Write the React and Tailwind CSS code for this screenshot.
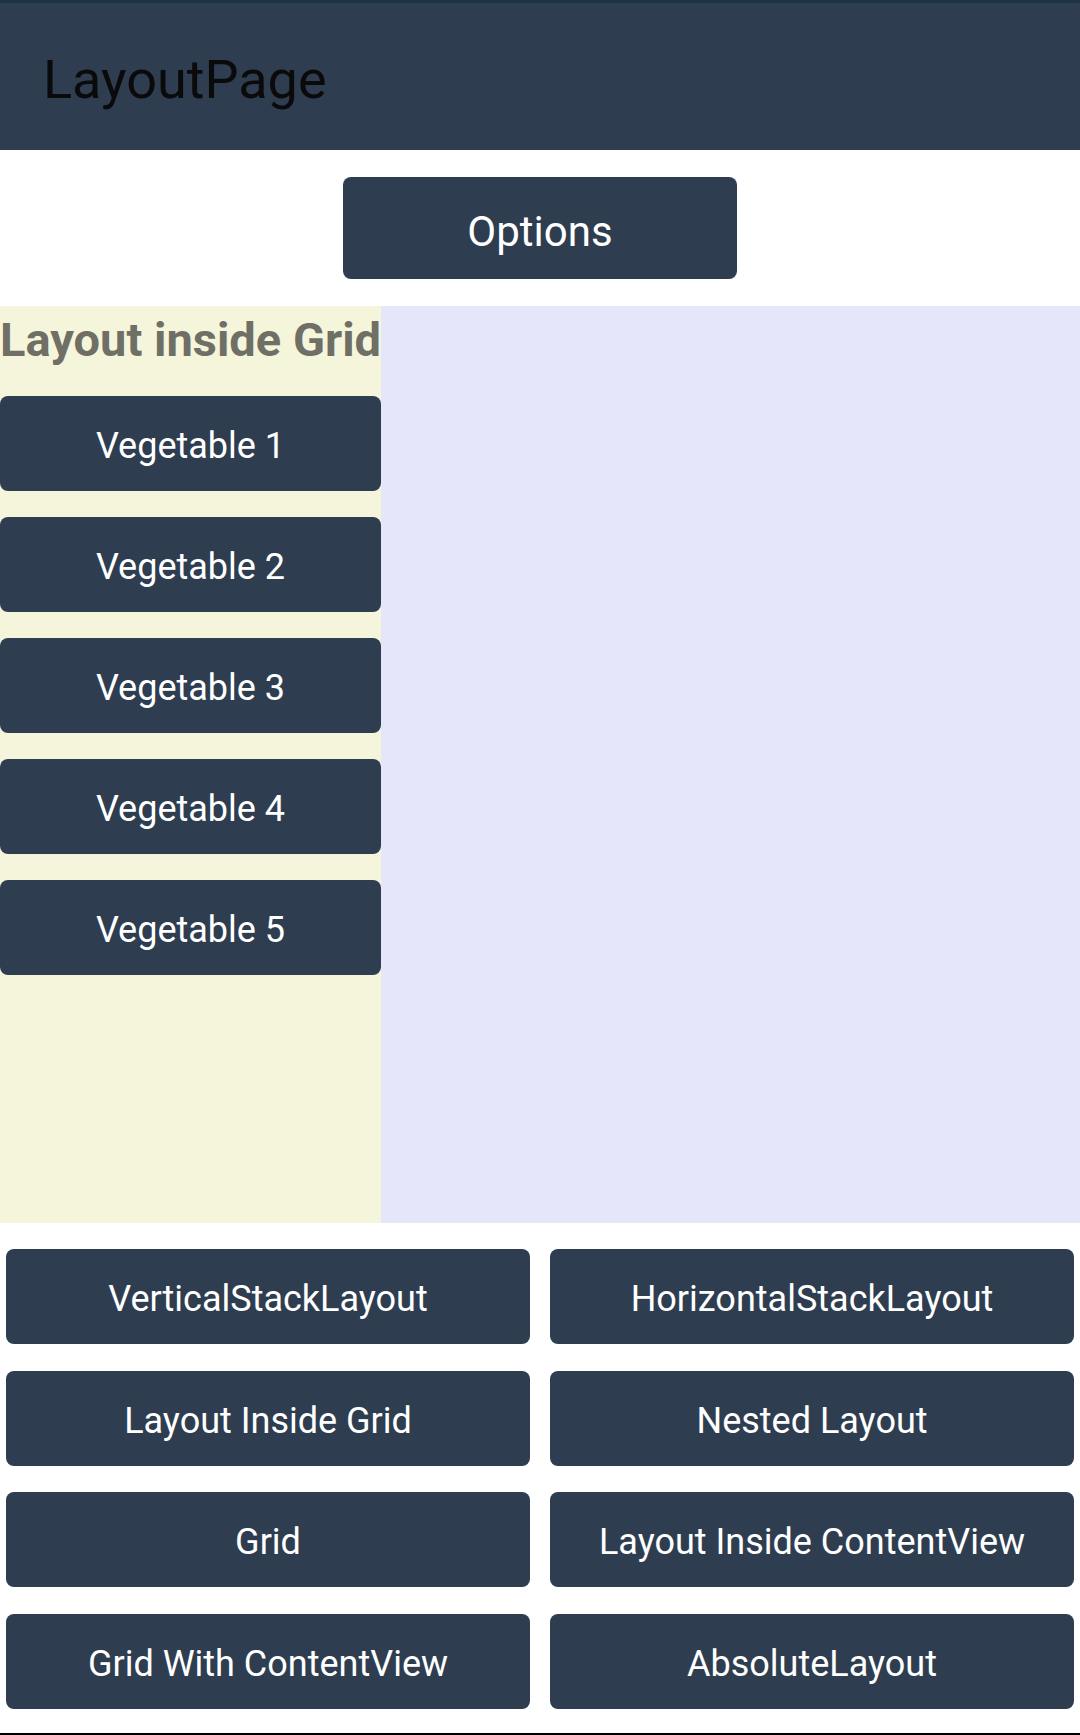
import React from 'react';

const vegetables = ["Vegetable 1", "Vegetable 2", "Vegetable 3", "Vegetable 4", "Vegetable 5"];

const pages = [
  "VerticalStackLayout",
  "HorizontalStackLayout",
  "Layout Inside Grid",
  "Nested Layout",
  "Grid",
  "Layout Inside ContentView",
  "Grid With ContentView",
  "AbsoluteLayout",
];

function NavButton({ label }) {
  return (
    <button className="h-[95px] pt-[5px] rounded-[8px] bg-[#2e3e50] text-white text-[36px] leading-none">
      {label}
    </button>
  );
}

export default function App() {
  return (
    <div className="w-[1080px] h-[1735px] bg-white flex flex-col font-['Roboto',sans-serif]">
      <div className="h-[3px] bg-[#1f3347]" />

      {/* title bar */}
      <header className="h-[147px] pt-[7px] bg-[#2e3e50] flex items-center pl-[43px]">
        <h1 className="text-[54px] leading-none text-[#0a0a0a]">LayoutPage</h1>
      </header>

      <div className="h-[156px] flex justify-center pt-[27px]">
        <button className="w-[394px] h-[102px] pt-[7px] rounded-[8px] bg-[#2e3e50] text-white text-[42px] leading-none">
          Options
        </button>
      </div>

      {/* layout inside grid */}
      <div className="h-[917px] grid grid-cols-[381px_1fr]">
        <div className="bg-[#f5f5dc] flex flex-col">
          <h2 className="mt-[11px] text-[47px] leading-[46px] font-bold text-[#6f6f65] whitespace-nowrap">
            Layout inside Grid
          </h2>
          <div className="mt-[33px] flex flex-col gap-[26px]">
            {vegetables.map((v) => (
              <NavButton key={v} label={v} />
            ))}
          </div>
        </div>
        <div className="bg-[#e6e6fa]" />
      </div>

      <div className="mt-[26px] px-[6px] grid grid-cols-2 gap-x-[20px] gap-y-[26.5px]">
        {pages.map((p) => (
          <NavButton key={p} label={p} />
        ))}
      </div>

      <div className="flex-1" />
      <div className="h-[2px] bg-black" />
    </div>
  );
}
